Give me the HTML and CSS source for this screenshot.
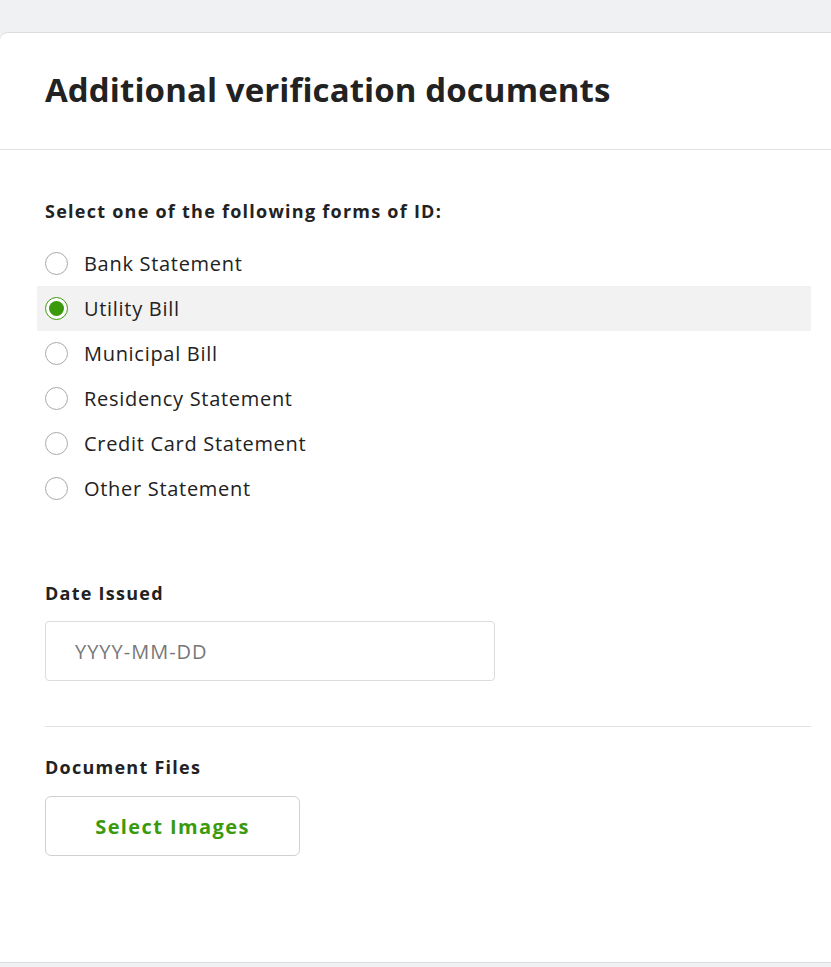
FILE: index.html
```html
<!DOCTYPE html>
<html lang="en">
<head>
<meta charset="utf-8">
<title>Additional verification documents</title>
<link rel="stylesheet" href="styles.css">
</head>
<body>
<div class="page">
  <section class="card">
    <header class="card-header">
      <h1 class="title">Additional verification documents</h1>
    </header>
    <div class="card-body">
      <h2 class="label label-first">Select one of the following forms of ID:</h2>
      <ul class="options">
        <li class="option"><span class="radio"></span><span class="option-text">Bank Statement</span></li>
        <li class="option option-selected"><span class="radio radio-checked"></span><span class="option-text">Utility Bill</span></li>
        <li class="option"><span class="radio"></span><span class="option-text">Municipal Bill</span></li>
        <li class="option"><span class="radio"></span><span class="option-text">Residency Statement</span></li>
        <li class="option"><span class="radio"></span><span class="option-text">Credit Card Statement</span></li>
        <li class="option"><span class="radio"></span><span class="option-text">Other Statement</span></li>
      </ul>
      <h2 class="label label-date">Date Issued</h2>
      <div class="input"><span class="placeholder">YYYY-MM-DD</span></div>
      <hr class="divider">
      <h2 class="label label-files">Document Files</h2>
      <button class="btn" type="button">Select Images</button>
    </div>
  </section>
</div>
</body>
</html>
```
FILE: styles.css
```css
* { box-sizing: border-box; }
html, body { margin: 0; padding: 0; }
body {
  background: #f0f1f3;
  font-family: "Open Sans", "Liberation Sans", sans-serif;
  color: #222;
}
.page { padding-top: 32px; }
.card {
  background: #fff;
  border-top: 1px solid #dcdcdc;
  border-bottom: 1px solid #dcdcdc;
  border-top-left-radius: 8px;
  height: 931px;
}
.card-header {
  border-bottom: 1px solid #e2e2e2;
  height: 117px;
  padding: 0 20px 0 45px;
  display: flex;
  align-items: center;
}
.title {
  margin: 0 0 3px;
  font-size: 33px;
  font-weight: 700;
  letter-spacing: 0.1px;
  color: #222;
}
.card-body { padding: 0 20px 0 45px; }
.label {
  margin: 0;
  font-size: 18px;
  font-weight: 700;
  letter-spacing: 1.25px;
  color: #222;
  line-height: 24px;
}
.label-first { padding-top: 49px; }
.options { list-style: none; margin: 18px 0 0; padding: 0; }
.option {
  display: flex;
  align-items: center;
  gap: 16px;
  height: 45px;
  margin-left: -8px;
  padding-left: 8px;
}
.option-selected { background: #f2f2f2; }
.radio {
  width: 23px;
  height: 23px;
  border-radius: 50%;
  border: 1px solid #aaa;
  background: #fff;
  flex: none;
  display: flex;
  align-items: center;
  justify-content: center;
}
.radio-checked { border-color: #3a9a0c; }
.radio-checked::after {
  content: "";
  width: 15px;
  height: 15px;
  border-radius: 50%;
  background: #3a9a0c;
}
.option-text { font-size: 20px; color: #222; letter-spacing: 0.7px; }
.label-date { margin-top: 70px; }
.input {
  margin-top: 16px;
  width: 450px;
  height: 60px;
  border: 1px solid #dcdcdc;
  border-radius: 4px;
  display: flex;
  align-items: center;
  padding-left: 29px;
}
.placeholder { font-size: 20px; color: #777; letter-spacing: 1px; }
.divider {
  margin: 45px 0 0;
  border: 0;
  border-top: 1px solid #e2e2e2;
}
.label-files { margin-top: 28px; }
.btn {
  margin-top: 17px;
  width: 255px;
  height: 60px;
  background: #fff;
  border: 1px solid #d0d0d0;
  border-radius: 6px;
  font-family: inherit;
  font-size: 20px;
  font-weight: 700;
  letter-spacing: 1.4px;
  color: #3a9a0c;
  cursor: pointer;
}
```
